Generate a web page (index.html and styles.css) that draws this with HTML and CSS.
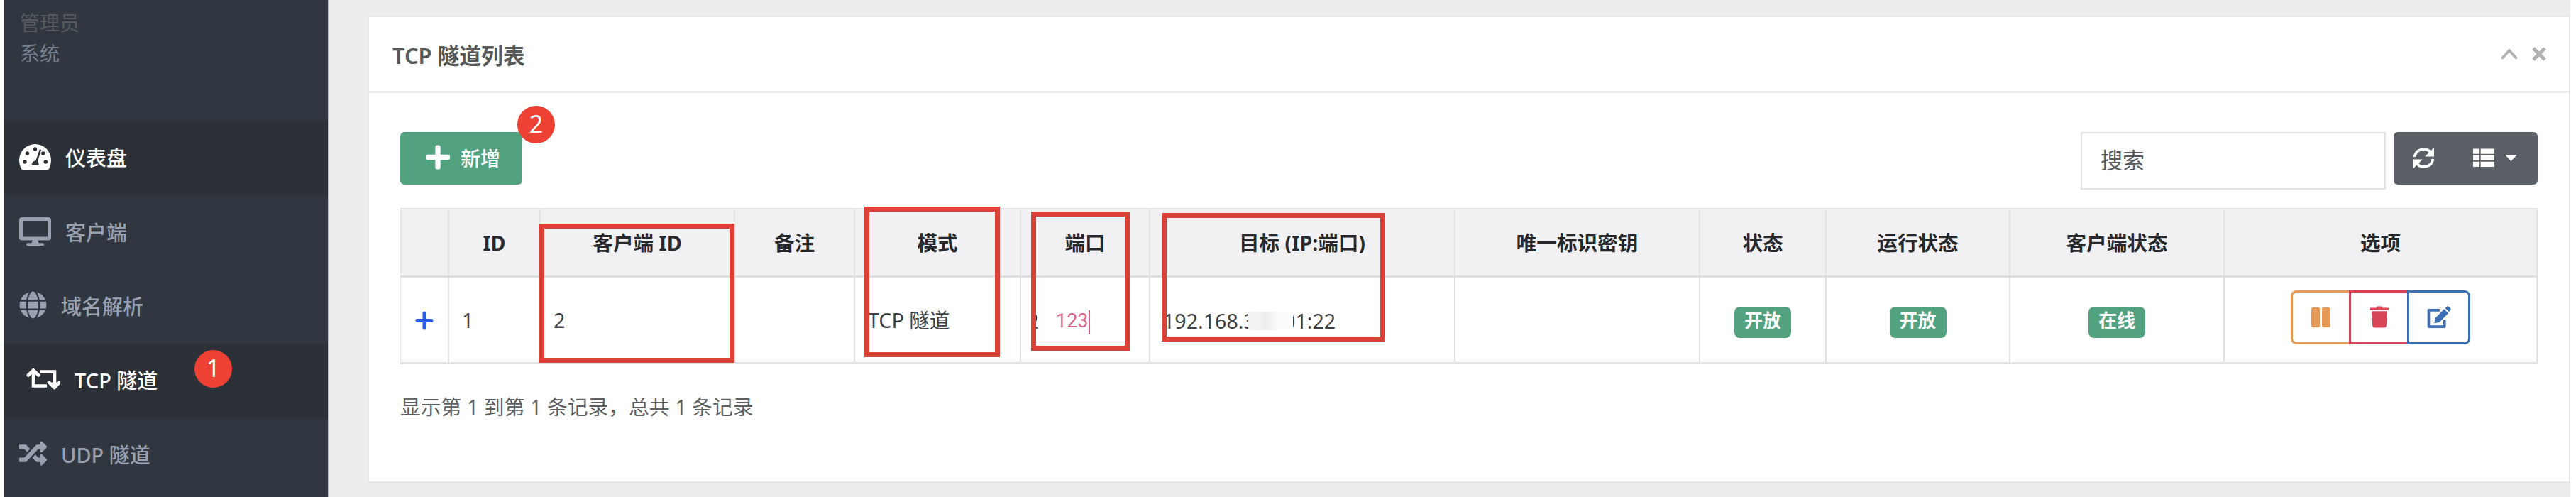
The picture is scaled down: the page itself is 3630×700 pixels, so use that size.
FILE: index.html
```html
<!DOCTYPE html>
<html lang="zh-CN">
<head>
<meta charset="utf-8">
<title>TCP 隧道列表</title>
<link rel="stylesheet" href="styles.css">
</head>
<body>
<div class="page">
  <aside class="sidebar">
    <div class="user">
      <div class="user-name">管理员</div>
      <div class="user-role">系统</div>
    </div>
    <nav class="nav">
      <a class="nav-item active">
        <svg width="45" height="37" viewBox="0 0 45 37"><path fill="#fff" d="M22.500 0A22.500 22.500 0 0 0 0 22.500c0 4 1 8.300 2.800 11.900.7 1.300 1.400 1.600 2.700 1.600h34c1.300 0 2-.3 2.700-1.600 1.800-3.600 2.800-7.900 2.800-11.900A22.500 22.500 0 0 0 22.500 0z"/><g fill="#2c3138"><circle cx="22.500" cy="7" r="2.700"/><circle cx="11.500" cy="13" r="2.700"/><circle cx="33.700" cy="13" r="2.700"/><circle cx="8" cy="25" r="2.700"/><circle cx="37.300" cy="25" r="2.700"/><path d="M28.800 7.400l2.300.8-5.100 16.300a5 5 0 0 1 1.300 5.500H18a5 5 0 0 1 5.300-6.400z"/></g></svg>
        <span>仪表盘</span>
      </a>
      <a class="nav-item">
        <svg width="45" height="40" viewBox="0 0 576 512"><path fill="currentColor" d="M528 0H48C21.500 0 0 21.500 0 48v320c0 26.500 21.500 48 48 48h192l-16 48h-72c-13.300 0-24 10.700-24 24s10.700 24 24 24h272c13.300 0 24-10.700 24-24s-10.700-24-24-24h-72l-16-48h192c26.500 0 48-21.500 48-48V48c0-26.500-21.500-48-48-48zm-16 352H64V64h448v288z"/></svg>
        <span>客户端</span>
      </a>
      <a class="nav-item">
        <svg width="39" height="39" viewBox="0 0 496 512"><path fill="currentColor" d="M336.500 160C322 70.700 287.800 8 248 8s-74 62.700-88.500 152h177zM152 256c0 22.200 1.200 43.500 3.300 64h185.300c2.100-20.500 3.300-41.800 3.300-64s-1.200-43.500-3.300-64H155.300c-2.100 20.500-3.300 41.800-3.300 64zm324.700-96c-28.600-67.900-86.500-120.400-158-141.600 24.400 33.800 41.200 84.700 50 141.600h108zM177.200 18.400C105.800 39.600 47.800 92.100 19.300 160h108c8.700-56.900 25.500-107.800 49.900-141.600zM487.400 192H372.700c2.100 21 3.300 42.500 3.300 64s-1.200 43-3.300 64h114.600c5.500-20.500 8.600-41.800 8.600-64s-3.100-43.500-8.500-64zM120 256c0-21.500 1.200-43 3.300-64H8.600C3.200 212.500 0 233.800 0 256s3.200 43.500 8.600 64h114.600c-2-21-3.200-42.500-3.200-64zm39.500 96c14.500 89.300 48.700 152 88.500 152s74-62.700 88.500-152h-177zm159.300 141.600c71.400-21.200 129.400-73.700 158-141.600h-108c-8.800 56.900-25.600 107.800-50 141.600zM19.300 352c28.600 67.900 86.500 120.400 158 141.600-24.400-33.800-41.200-84.700-50-141.600h-108z"/></svg>
        <span>域名解析</span>
      </a>
      <a class="nav-item active nested">
        <svg width="48" height="32" viewBox="0 0 48 32"><g fill="none" stroke="#fff" stroke-width="4.600"><path d="M10 4v21.500h19"/><path d="M19 5.500h21V27"/><path stroke-linecap="round" stroke-linejoin="round" d="M2.800 10.500L10 3.300l7.200 7.200M32 20.500l7.600 7.700 7.200-7.700"/></g><path fill="#fff" d="M32 20.500h15l-7.400 8z"/></svg>
        <span>TCP 隧道</span>
        <b class="step step-nav">1</b>
      </a>
      <a class="nav-item">
        <svg width="39" height="39" viewBox="0 0 512 512"><path fill="currentColor" d="M504.971 359.029c9.373 9.373 9.373 24.569 0 33.941l-80 79.984c-15.010 15.010-40.971 4.490-40.971-16.971V416h-58.785a12.004 12.004 0 0 1-8.773-3.812l-70.556-75.596 53.333-57.143L352 336h32v-39.981c0-21.438 25.943-31.998 40.971-16.971l80 79.981zM12 176h84l52.781 56.551 53.333-57.143-70.556-75.596A11.999 11.999 0 0 0 122.785 96H12c-6.627 0-12 5.373-12 12v56c0 6.627 5.373 12 12 12zm372 0v39.984c0 21.460 25.961 31.980 40.971 16.971l80-79.984c9.373-9.373 9.373-24.569 0-33.941l-80-79.981C409.943 24.021 384 34.582 384 56.019V96h-58.785a12.004 12.004 0 0 0-8.773 3.812L96 336H12c-6.627 0-12 5.373-12 12v56c0 6.627 5.373 12 12 12h110.785c3.326 0 6.503-1.381 8.773-3.812L352 176h32z"/></svg>
        <span>UDP 隧道</span>
      </a>
    </nav>
  </aside>

  <main class="main">
    <section class="panel">
      <header class="panel-head">
        <h1>TCP 隧道列表</h1>
        <div class="panel-tools">
          <svg width="24" height="16" viewBox="0 0 24 16"><path fill="none" stroke="#b0b1b3" stroke-width="3.800" d="M1.500 14.500L12 3l10.500 11.500"/></svg>
          <svg width="20" height="20" viewBox="0 0 21 21"><path fill="none" stroke="#b0b1b3" stroke-width="5.200" d="M2 2l17 17M19 2L2 19"/></svg>
        </div>
      </header>
      <div class="panel-body">
        <div class="toolbar">
          <button class="btn-add">
            <svg width="34" height="35" viewBox="0 32 448 448"><path fill="#fff" d="M416 208H272V64c0-17.670-14.330-32-32-32h-32c-17.670 0-32 14.330-32 32v144H32c-17.670 0-32 14.330-32 32v32c0 17.670 14.330 32 32 32h144v144c0 17.670 14.330 32 32 32h32c17.670 0 32-14.330 32-32V304h144c17.670 0 32-14.330 32-32v-32c0-17.670-14.330-32-32-32z"/></svg>
            <span>新增</span>
            <b class="step step-add">2</b>
          </button>
          <div class="toolbar-right">
            <div class="search">搜索</div>
            <div class="btn-group">
              <svg width="31" height="31" viewBox="0 0 31 31"><g fill="none" stroke="#fff" stroke-width="3.800"><path d="M2.500 14A13 13 0 0 1 25.500 8"/><path d="M28.500 17A13 13 0 0 1 5.500 23"/></g><path fill="#fff" d="M30 .8v12.700H17.300l4.400-4.400 3.900-3.900zM1 30.200V17.500h12.700l-4.400 4.400-3.900 3.900z"/></svg>
              <svg class="icon-list" width="30" height="27" viewBox="0 0 31 27"><path fill="#fff" d="M0 0h9v7.500H0zM11 0h20v7.500H11zM0 9.500h9v7.500H0zM11 9.500h20v7.500H11zM0 19h9v7.500H0zM11 19h20v7.500H11z"/></svg>
              <svg class="icon-caret" width="17" height="9" viewBox="0 0 17 9"><path fill="#fff" d="M0 0h17L8.500 9z"/></svg>
            </div>
          </div>
        </div>

        <div class="table">
          <div class="row head">
            <div></div><div>ID</div><div>客户端 ID</div><div>备注</div><div>模式</div><div>端口</div><div>目标 (IP:端口)</div><div>唯一标识密钥</div><div>状态</div><div>运行状态</div><div>客户端状态</div><div>选项</div>
          </div>
          <div class="row">
            <div class="center"><svg width="26" height="27" viewBox="0 0 26 27"><path fill="none" stroke="#2c5be6" stroke-width="5" stroke-linecap="round" d="M13 3v21M3 13.500h20"/></svg></div>
            <div>1</div>
            <div>2</div>
            <div></div>
            <div>TCP 隧道</div>
            <div class="port"><span class="port-cut"><span>2</span></span><span class="port-edit">123</span><i class="text-caret"></i></div>
            <div class="target"><span>192.168.</span><span class="target-cut">3</span><i class="mosaic"></i><span class="target-cut-end">0</span><span>1:22</span></div>
            <div></div>
            <div class="center"><span class="badge">开放</span></div>
            <div class="center"><span class="badge">开放</span></div>
            <div class="center"><span class="badge">在线</span></div>
            <div class="center">
              <div class="actions">
                <span class="act pause"><svg width="27" height="28" viewBox="0 0 27 28"><path fill="currentColor" d="M2.500 0h7A2.500 2.500 0 0 1 12 2.500v23A2.500 2.500 0 0 1 9.500 28h-7A2.500 2.500 0 0 1 0 25.500v-23A2.500 2.500 0 0 1 2.500 0zM17.500 0h7A2.500 2.500 0 0 1 27 2.500v23a2.500 2.500 0 0 1-2.500 2.500h-7a2.500 2.500 0 0 1-2.500-2.500v-23A2.500 2.500 0 0 1 17.500 0z"/></svg></span>
                <span class="act trash"><svg width="26" height="31" viewBox="0 0 27 31"><path fill="currentColor" d="M1 2h7.500L10 0h7l1.500 2H26a1 1 0 0 1 1 1v2.500H0V3a1 1 0 0 1 1-1zM2 7h23l-1.300 21.300A3 3 0 0 1 20.800 31H6.200a3 3 0 0 1-2.900-2.700z"/></svg></span>
                <span class="act edit"><svg width="34" height="31" viewBox="0 0 34 32"><path fill="none" stroke="currentColor" stroke-width="3.800" stroke-linejoin="round" d="M18 6H2v24h23V20"/><path fill="currentColor" d="M24.500 4.500l6 6L17.500 23.500 10 25.200l1.500-7.700zM26 3l2-2a2.500 2.500 0 0 1 3.500 0L33.300 2.800a2.500 2.500 0 0 1 0 3.500L31.500 8.500z"/></svg></span>
              </div>
            </div>
          </div>
        </div>
        <div class="summary">显示第 1 到第 1 条记录，总共 1 条记录</div>
      </div>
    </section>
  </main>

  <div class="mark mark-client"></div>
  <div class="mark mark-mode"></div>
  <div class="mark mark-port"></div>
  <div class="mark mark-target"></div>
</div>
</body>
</html>
```
FILE: styles.css
```css
* { box-sizing: border-box; }
body {
  margin: 0;
  background: #fff;
  font-family: "Noto Sans", "Noto Sans CJK SC", sans-serif;
  font-size: 28.6px;
  color: #3e4144;
}
svg { display: block; flex: none; }
.page {
  position: relative;
  display: flex;
  width: 3630px;
  height: 700px;
  padding: 0 8px 0 6px;
  overflow: hidden;
}

/* Sidebar */
.sidebar {
  width: 457px;
  flex: none;
  background: #303740;
  border-right: 1px solid #b9bcc4;
  white-space: nowrap;
}
.user {
  height: 171px;
  padding: 11px 0 0 22px;
  font-size: 28px;
  line-height: 43px;
}
.user-name { color: #575b5e; }
.user-role { color: #76808e; }
.nav-item {
  position: relative;
  display: flex;
  align-items: center;
  gap: 20px;
  height: 104.400px;
  padding: 0 0 4px 21px;
  color: #99a1b0;
  font-size: 29px;
  font-weight: 500;
}
.nav-item.active {
  background: #2c3138;
  color: #fff;
}
.nav-item.nested { padding-left: 31px; }

.step {
  position: absolute;
  width: 53px;
  height: 53px;
  border-radius: 50%;
  background: #ec4134;
  color: #fff;
  font: 400 34px/50px "Noto Sans", sans-serif;
  text-align: center;
}
.step-nav { left: 268px; top: 9px; }
.step-add { left: 165px; top: -37px; }

/* Panel */
.main {
  flex: 1;
  padding: 22px 0 0 55px;
  background: #ededee;
}
.panel {
  height: 658px;
  background: #fff;
  border: 2px solid #e5e7e8;
}
.panel-head {
  display: flex;
  align-items: center;
  justify-content: space-between;
  height: 107px;
  padding: 0 32px 0 33px;
  border-bottom: 3px solid #e9ebec;
}
.panel-head h1 {
  margin: 0;
  font-size: 30.800px;
  font-weight: 600;
  color: #56585a;
}
.panel-tools {
  display: flex;
  align-items: center;
  gap: 20px;
}
.panel-body { padding: 55px 44px 0 44px; }
.toolbar {
  display: flex;
  justify-content: space-between;
  height: 107px;
}
.btn-add {
  position: relative;
  display: flex;
  align-items: center;
  gap: 15px;
  width: 172px;
  height: 74px;
  padding: 0 0 3px 36px;
  border: 0;
  border-radius: 6px;
  background: #52a17f;
  color: #fff;
  font: 500 28px "Noto Sans", "Noto Sans CJK SC", sans-serif;
  white-space: nowrap;
}
.toolbar-right {
  display: flex;
  align-items: flex-start;
  gap: 11px;
}
.search {
  width: 430px;
  height: 81px;
  padding-left: 26px;
  border: 2px solid #e2e3e4;
  font-size: 31px;
  line-height: 75px;
  color: #55595e;
}
.btn-group {
  display: flex;
  align-items: center;
  width: 203px;
  height: 74px;
  padding: 0 0 2px 27px;
  border-radius: 6px;
  background: #5b6066;
}
.icon-list { margin-left: 54px; }
.icon-caret { margin-left: 15px; }

/* Table */
.table {
  width: 3012px;
  border: solid #e2e3e5;
  border-width: 2px 2px 3px 1px;
}
.row {
  display: grid;
  grid-template-columns: 68px 129px 274px 169px 234px 182px 430px 345px 178px 259px 302px 1fr;
  height: 119px;
  line-height: 119px;
  white-space: nowrap;
}
.row > div {
  padding-left: 18px;
  border-right: 2px solid #e2e3e5;
}
.row > div:last-child { border-right: 0; }
.row.head {
  height: 96px;
  line-height: 94px;
  background: #f1f1f3;
  border-bottom: 3px solid #dddfe1;
  color: #26282b;
  font-weight: 700;
}
.row.head > div {
  padding: 0;
  text-align: center;
}
.row > .center {
  display: flex;
  align-items: center;
  justify-content: center;
  padding: 0;
}
.row > .port {
  display: flex;
  align-items: center;
  padding-left: 21px;
}
.port-cut {
  display: flex;
  justify-content: flex-end;
  width: 4px;
  overflow: hidden;
}
.port-edit {
  margin-left: 24px;
  padding-top: 2px;
  font-family: Roboto, sans-serif;
  font-size: 27px;
  color: #d9638c;
}
.text-caret {
  width: 2px;
  height: 34px;
  margin-top: 5px;
  background: #c9688b;
}
.row > .target {
  display: flex;
  align-items: center;
}
.target-cut {
  width: 7px;
  overflow: hidden;
}
.mosaic {
  width: 63px;
  height: 26px;
  background: linear-gradient(90deg, #f5f5f5, #eeeeef 40%, #fbfbfb 65%, #fdfdfd);
}
.target-cut-end {
  display: flex;
  justify-content: flex-end;
  width: 3px;
  overflow: hidden;
}
.badge {
  width: 80px;
  height: 44px;
  margin-top: 4px;
  border-radius: 8px;
  background: #52a17f;
  color: #fff;
  font-size: 26px;
  font-weight: 600;
  line-height: 39px;
  text-align: center;
}
.actions {
  display: flex;
  margin-top: -10px;
}
.act {
  display: flex;
  align-items: center;
  justify-content: center;
  width: 82px;
  height: 76px;
  border: 2px solid currentColor;
  border-width: 3px 0 3px 3px;
}
.pause { color: #e79a56; border-radius: 8px 0 0 8px; }
.trash { color: #d64658; }
.edit { width: 89px; color: #3c6eb6; border-right-width: 3px; border-radius: 0 8px 8px 0; }

.summary {
  margin-top: 38px;
  font-size: 28.800px;
  line-height: 44px;
  color: #5c5f61;
}

/* Highlight frames laid over the table */
.mark {
  position: absolute;
  border: 7px solid #dc4137;
}
.mark-client { left: 760px; top: 315px; width: 275px; height: 196px; }
.mark-mode { left: 1218px; top: 291px; width: 191px; height: 212px; }
.mark-port { left: 1453px; top: 298px; width: 139px; height: 196px; }
.mark-target { left: 1637px; top: 300px; width: 315px; height: 181px; }
```
